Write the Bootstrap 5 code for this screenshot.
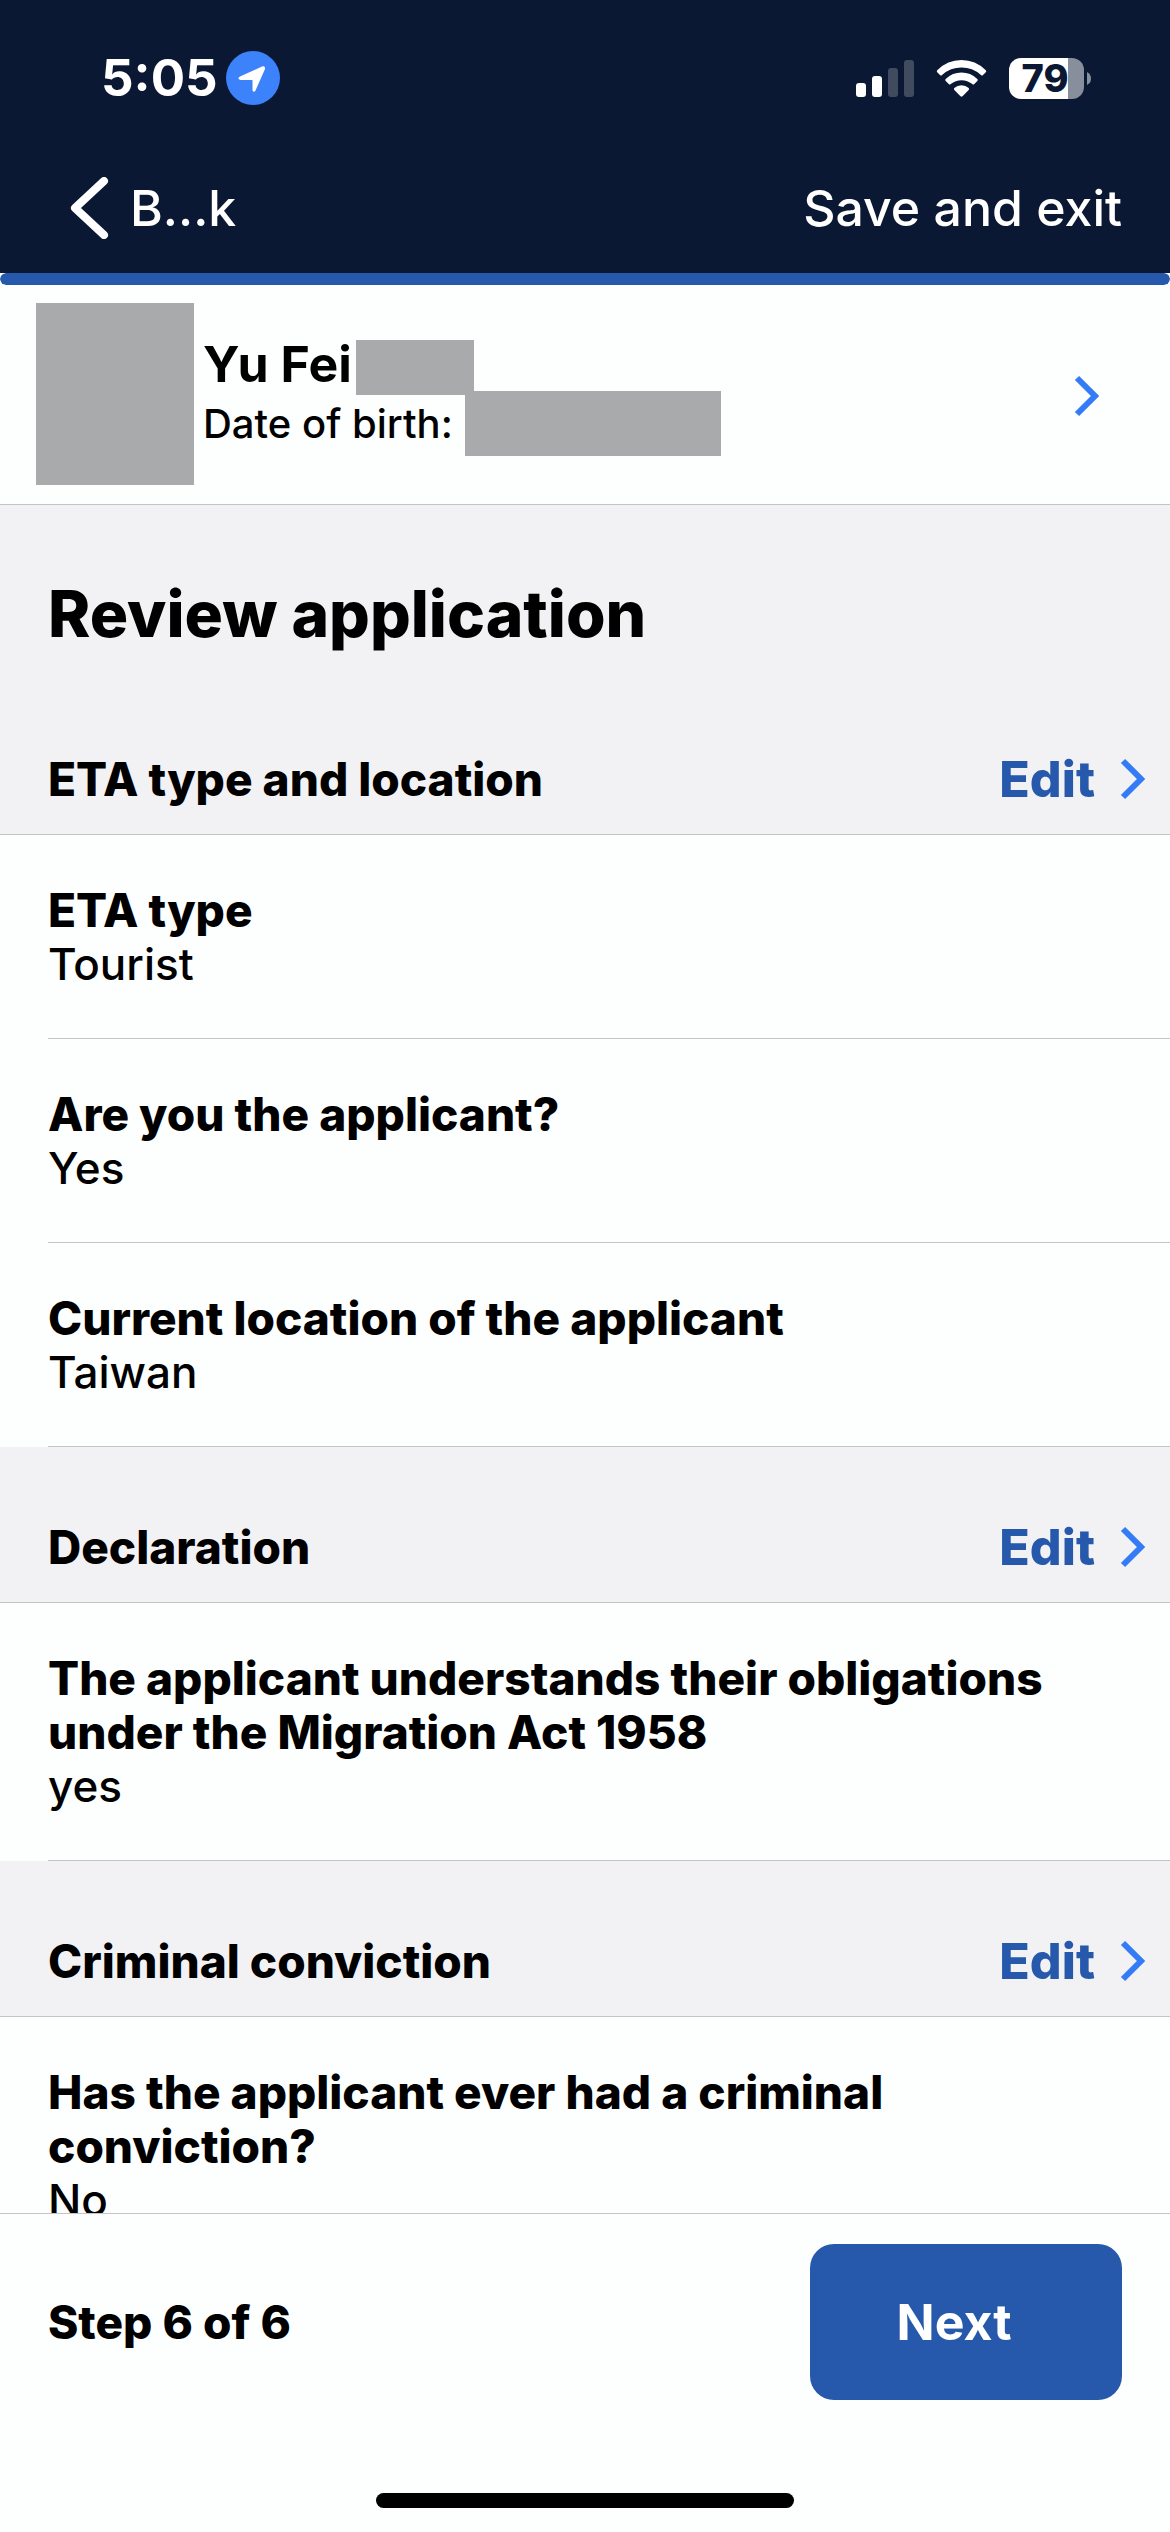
<!DOCTYPE html>
<html lang="en">
<head>
<meta charset="utf-8">
<meta name="viewport" content="width=device-width, initial-scale=1">
<title>Review application</title>
<link href="https://cdn.jsdelivr.net/npm/bootstrap@5.3.0/dist/css/bootstrap.min.css" rel="stylesheet">
<style>
  :root { --navy: #0b1833; --royal: #2659ab; --sky: #347bf6; --hairline: #c4c5c9; --gutter: 48px; }
  body { font-family: Inter, "Liberation Sans", sans-serif; font-size: 44px; line-height: 54px; color: #000; background: #fdfefe; }
  a { text-decoration: none; color: inherit; }
  svg { flex: none; display: block; }
  .app-top { background: var(--navy); color: #fff; }
  .status-strip { height: 156px; padding: 0 79px 0 101px; }
  .clock { font-size: 51px; font-weight: 700; }
  .signal-set { gap: 22px; }
  .title-strip { height: 117px; padding: 0 var(--gutter) 14px 70px; font-size: 50px; font-weight: 500; }
  .back-link { gap: 20px; }
  .step-progress { height: 12px; border-radius: 6px; --bs-progress-bar-bg: var(--royal); }
  .step-progress .progress-bar { border-radius: 6px; }
  .person { padding: 18px 70px 19px 36px; border-bottom: 1px solid var(--hairline); }
  .redacted { background: #a9aaac; }
  .photo { width: 158px; height: 182px; }
  .person-text { padding: 37px 0 0 9px; }
  .person-name { font-size: 50px; line-height: 48px; font-weight: 750; gap: 4px; }
  .person-name .redacted { width: 118px; height: 55px; }
  .person-dob { font-size: 40px; font-weight: 500; gap: 12px; margin-top: -4px; }
  .person-dob .redacted { width: 256px; height: 65px; }
  .review { background: #f2f2f5; min-height: 0; }
  .review h1 { font-size: 64px; line-height: 80px; font-weight: 800; padding: 69px var(--gutter) 25px; }
  .group-head { padding: 73px 24px 28px var(--gutter); height: 156px; border-bottom: 1px solid var(--hairline); }
  .group-head h2, .answer dt, .step-count { font-size: 46px; line-height: 54px; font-weight: 800; }
  .edit-link { font-size: 50px; font-weight: 800; color: var(--royal); gap: 25px; }
  .answers { background: #fdfefe; padding-left: var(--gutter); }
  .answer { padding: 48px 100px 47px 0; border-bottom: 1px solid var(--hairline); }
  .answer dd { font-weight: 500; }
  .app-foot { border-top: 1px solid var(--hairline); background: #fdfefe; padding: 30px var(--gutter) 24px; }
  .btn-next { --bs-btn-bg: var(--royal); --bs-btn-color: #fff; --bs-btn-hover-bg: #1f4c94; --bs-btn-hover-color: #fff;
    width: 312px; height: 156px; border: 0; border-radius: 24px; font-size: 50px; font-weight: 750; padding: 0 24px 0 0; }
  .home-bar { width: 418px; height: 15px; border-radius: 8px; background: #000; margin-top: 93px; }
</style>
<script src="https://cdn.jsdelivr.net/npm/bootstrap@5.3.0/dist/js/bootstrap.bundle.min.js"></script>
</head>
<body>
<div class="d-flex flex-column vh-100 overflow-hidden">
  <header class="app-top flex-shrink-0">
    <div class="status-strip d-flex align-items-center justify-content-between">
      <div class="d-flex align-items-center gap-2">
        <span class="clock">5:05</span>
        <svg width="54" height="54" viewBox="0 0 54 54" aria-hidden="true"><circle cx="27" cy="27" r="27" fill="#3b82fb"/><path d="M14 25.500 36 15.500Q39.500 14.500 39 18L29.500 39.500Q28 42 26.500 39.500V29.500Q26.500 29 26 29H14.500Q10.500 27.500 14 25.500Z" fill="#fff"/></svg>
      </div>
      <div class="signal-set d-flex align-items-center">
        <svg width="58" height="41" viewBox="0 0 58 41" aria-hidden="true"><g fill="#fff"><rect y="25" width="10" height="14" rx="3"/><rect x="16" y="18" width="10" height="21" rx="3"/><g opacity=".22"><rect x="32" y="10" width="10" height="29" rx="3"/><rect x="48" y="2" width="10" height="37" rx="3"/></g></g></svg>
        <svg width="51" height="41" viewBox="0 0 51 41" aria-hidden="true"><g fill="#fff"><path d="M1.200 12.200Q11.500 2 25.500 2T49.800 12.200Q50.800 13.200 49.800 14.200L47 17Q46 18 45 17Q36.500 9.600 25.500 9.600T6 17Q5 18 4 17L1.200 14.200Q.2 13.200 1.200 12.200Z"/><path d="M9.700 21Q16.500 14.600 25.500 14.600T41.300 21Q42.300 22 41.300 23L38.300 26Q37.300 27 36.300 26Q31.500 22.200 25.500 22.200T14.700 26Q13.700 27 12.700 26L9.700 23Q8.700 22 9.700 21Z"/><path d="M18.300 30Q21.300 27.300 25.500 27.300T32.700 30Q33.500 30.900 32.700 31.900L26.500 38.300Q25.500 39.200 24.500 38.300L18.300 31.900Q17.500 30.900 18.300 30Z"/></g></svg>
        <svg width="82" height="41" viewBox="0 0 82 41" role="img" aria-label="Battery 79 percent"><path d="M12 0H59V41H12A12 12 0 0 1 0 29V12A12 12 0 0 1 12 0Z" fill="#fff"/><path d="M59 0H63A12 12 0 0 1 75 12V29A12 12 0 0 1 63 41H59Z" fill="#878e9c"/><path d="M78 14Q82 16 82 20.500T78 27Z" fill="#878e9c"/><text x="36" y="34" text-anchor="middle" font-family="Inter, sans-serif" font-size="38" font-weight="800" fill="#0b1833">79</text></svg>
      </div>
    </div>
    <nav class="title-strip d-flex align-items-center justify-content-between" aria-label="Application">
      <a href="#" class="back-link d-flex align-items-center"><svg width="40" height="62" viewBox="0 0 40 62" fill="none" stroke="#fff" stroke-width="8" stroke-linecap="round" stroke-linejoin="round" aria-hidden="true"><path d="M34 4 5 31 34 58"/></svg>B...k</a>
      <a href="#">Save and exit</a>
    </nav>
  </header>
  <div class="progress step-progress bg-white flex-shrink-0" role="progressbar" aria-label="Application progress" aria-valuenow="6" aria-valuemin="0" aria-valuemax="6"><div class="progress-bar w-100"></div></div>

  <a href="#" class="person d-flex align-items-start flex-shrink-0">
    <span class="photo redacted"></span>
    <span class="person-text flex-grow-1">
      <span class="person-name d-flex align-items-start">Yu Fei<span class="redacted"></span></span>
      <span class="person-dob d-flex align-items-center">Date of birth:<span class="redacted"></span></span>
    </span>
    <svg class="align-self-center mt-1" width="26" height="42" viewBox="0 0 26 42" fill="none" stroke="#347bf6" stroke-width="6" aria-hidden="true"><path d="M3 3 21 21 3 39"/></svg>
  </a>

  <main class="review flex-grow-1 overflow-hidden">
    <h1 class="mb-0">Review application</h1>

    <section>
      <div class="group-head d-flex align-items-center justify-content-between">
        <h2 class="mb-0">ETA type and location</h2>
        <a href="#" class="edit-link d-flex align-items-center">Edit<svg width="26" height="42" viewBox="0 0 26 42" fill="none" stroke="#347bf6" stroke-width="6" aria-hidden="true"><path d="M3 3 21 21 3 39"/></svg></a>
      </div>
      <dl class="answers mb-0">
        <div class="answer"><dt>ETA type</dt><dd class="mb-0">Tourist</dd></div>
        <div class="answer"><dt>Are you the applicant?</dt><dd class="mb-0">Yes</dd></div>
        <div class="answer"><dt>Current location of the applicant</dt><dd class="mb-0">Taiwan</dd></div>
      </dl>
    </section>

    <section>
      <div class="group-head d-flex align-items-center justify-content-between">
        <h2 class="mb-0">Declaration</h2>
        <a href="#" class="edit-link d-flex align-items-center">Edit<svg width="26" height="42" viewBox="0 0 26 42" fill="none" stroke="#347bf6" stroke-width="6" aria-hidden="true"><path d="M3 3 21 21 3 39"/></svg></a>
      </div>
      <dl class="answers mb-0">
        <div class="answer"><dt>The applicant understands their obligations under the Migration Act 1958</dt><dd class="mb-0">yes</dd></div>
      </dl>
    </section>

    <section>
      <div class="group-head d-flex align-items-center justify-content-between">
        <h2 class="mb-0">Criminal conviction</h2>
        <a href="#" class="edit-link d-flex align-items-center">Edit<svg width="26" height="42" viewBox="0 0 26 42" fill="none" stroke="#347bf6" stroke-width="6" aria-hidden="true"><path d="M3 3 21 21 3 39"/></svg></a>
      </div>
      <dl class="answers mb-0">
        <div class="answer"><dt>Has the applicant ever had a criminal conviction?</dt><dd class="mb-0">No</dd></div>
      </dl>
    </section>
  </main>

  <footer class="app-foot flex-shrink-0">
    <div class="d-flex align-items-center justify-content-between">
      <span class="step-count">Step 6 of 6</span>
      <button type="button" class="btn btn-next">Next</button>
    </div>
    <div class="home-bar mx-auto"></div>
  </footer>
</div>
</body>
</html>
